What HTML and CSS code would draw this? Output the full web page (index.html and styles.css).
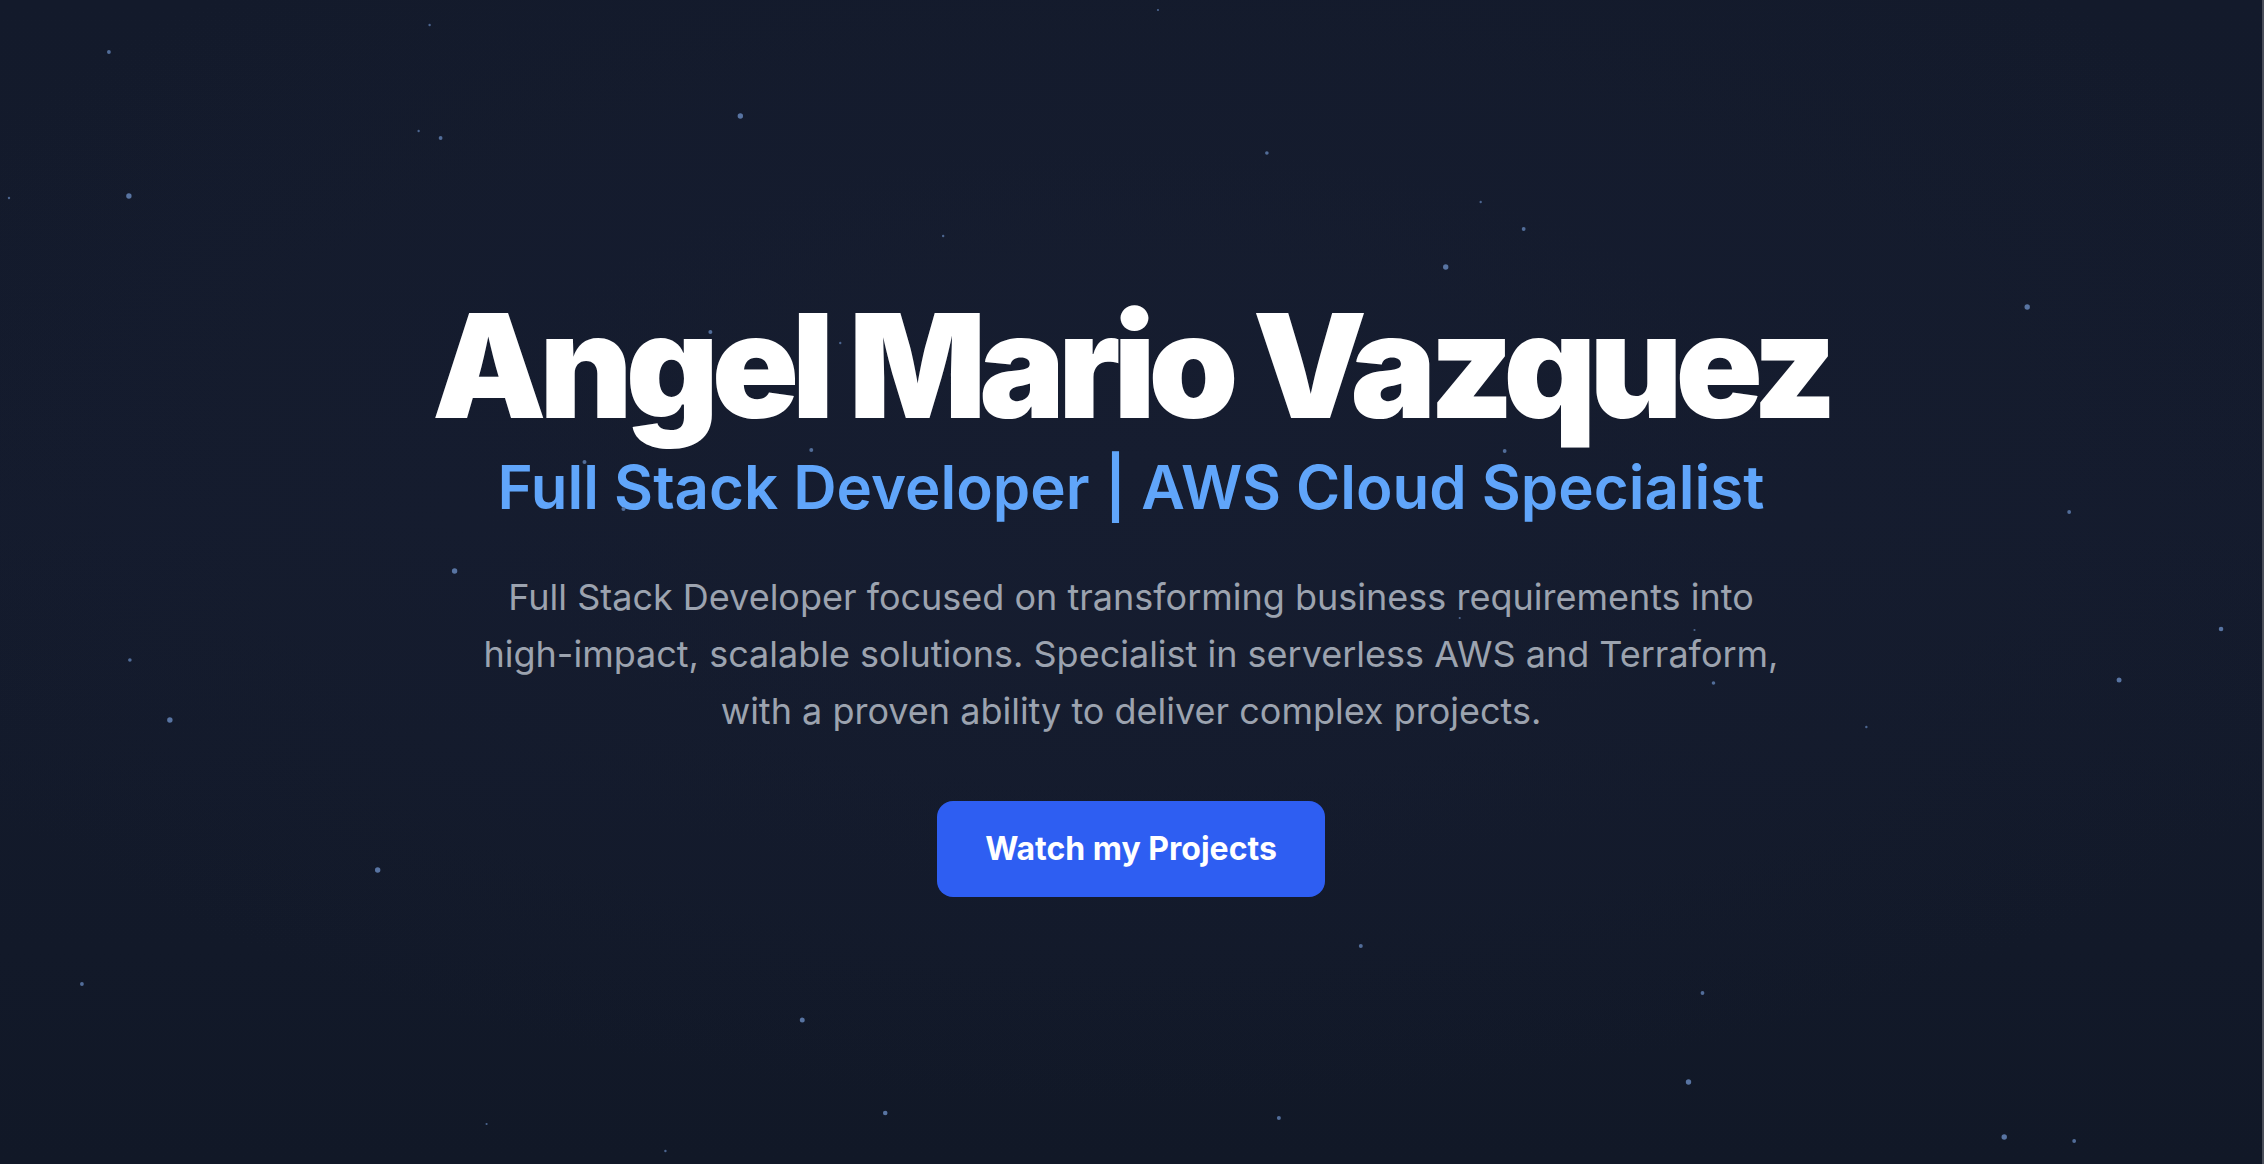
FILE: index.html
```html
<!DOCTYPE html>
<html lang="en">
<head>
<meta charset="utf-8">
<title>Angel Mario Vazquez</title>
<link rel="stylesheet" href="styles.css">
</head>
<body>
<main class="hero">
  <svg class="stars" viewBox="0 0 2264 1164" preserveAspectRatio="none" aria-hidden="true">
    <g class="star-md">
      <circle cx="741" cy="116" r="2.7"/>
      <circle cx="129" cy="196" r="2.7"/>
      <circle cx="455" cy="571" r="2.7"/>
      <circle cx="1447" cy="267" r="2.7"/>
      <circle cx="2029" cy="307" r="2.7"/>
      <circle cx="170" cy="720" r="2.7"/>
      <circle cx="378" cy="870" r="2.7"/>
      <circle cx="803" cy="1020" r="2.5"/>
      <circle cx="2121" cy="680" r="2.5"/>
      <circle cx="1690" cy="1082" r="2.7"/>
      <circle cx="2006" cy="1137" r="2.7"/>
      <circle cx="2223" cy="629" r="2.3"/>
      <circle cx="886" cy="1113" r="2.3"/>
    </g>
    <g class="star-sm">
      <circle cx="109" cy="52" r="1.9"/>
      <circle cx="441" cy="138" r="1.9"/>
      <circle cx="711" cy="332" r="2"/>
      <circle cx="812" cy="450" r="2"/>
      <circle cx="585" cy="462" r="2"/>
      <circle cx="624" cy="509" r="2"/>
      <circle cx="1268" cy="153" r="1.8"/>
      <circle cx="1525" cy="229" r="1.9"/>
      <circle cx="1506" cy="451" r="1.9"/>
      <circle cx="2071" cy="512" r="1.9"/>
      <circle cx="130" cy="660" r="1.8"/>
      <circle cx="82" cy="984" r="1.9"/>
      <circle cx="1715" cy="683" r="1.8"/>
      <circle cx="1362" cy="946" r="2"/>
      <circle cx="1704" cy="993" r="1.9"/>
      <circle cx="1280" cy="1118" r="2"/>
      <circle cx="2076" cy="1141" r="1.9"/>
    </g>
    <g class="star-xs">
      <circle cx="430" cy="25" r="1.2"/>
      <circle cx="419" cy="131" r="1.2"/>
      <circle cx="9" cy="198" r="1.2"/>
      <circle cx="944" cy="236" r="1.2"/>
      <circle cx="841" cy="343" r="1.2"/>
      <circle cx="1159" cy="10" r="1.1"/>
      <circle cx="1482" cy="202" r="1.2"/>
      <circle cx="487" cy="1124" r="1.1"/>
      <circle cx="666" cy="1151" r="1.2"/>
      <circle cx="1461" cy="618" r="1.1"/>
      <circle cx="1696" cy="630" r="1.1"/>
      <circle cx="1868" cy="727" r="1.2"/>
    </g>
  </svg>

  <section class="intro">
    <h1 class="name">Angel Mario Vazquez</h1>
    <h2 class="role">Full Stack Developer | AWS Cloud Specialist</h2>
    <p class="summary">Full Stack Developer focused on transforming business requirements into <span class="nowrap">high-impact,</span> scalable solutions. Specialist in serverless AWS and Terraform, with a proven ability to deliver complex projects.</p>
    <a class="cta" href="#projects">Watch my Projects</a>
  </section>
</main>
</body>
</html>
```

FILE: styles.css
```css
* {
  box-sizing: border-box;
}

html, body {
  margin: 0;
  padding: 0;
}

body {
  font-family: "Inter", "Noto Sans", "Liberation Sans", sans-serif;
  background: #131a2b;
  color: #ffffff;
  overflow: hidden;
}

.hero {
  position: relative;
  min-height: 1164px;
  display: flex;
  flex-direction: column;
  align-items: center;
  justify-content: center;
  background:
    radial-gradient(ellipse 60% 55% at 50% 40%, #161d30 0%, rgba(22, 29, 48, 0) 100%),
    linear-gradient(180deg, #131a2b 0%, #141b2d 45%, #111827 100%);
  border-right: 2px solid #4a4e59;
}

.stars {
  position: absolute;
  inset: 0;
  width: 100%;
  height: 100%;
  z-index: 2;
  pointer-events: none;
}

.star-md {
  fill: #5874a2;
}

.star-sm {
  fill: #526d99;
}

.star-xs {
  fill: #4c658f;
}

.intro {
  position: relative;
  z-index: 1;
  display: flex;
  flex-direction: column;
  align-items: center;
  text-align: center;
  padding-top: 26px;
}

.name {
  margin: 0;
  font-size: 144px;
  line-height: 1;
  font-weight: 900;
  letter-spacing: -0.05em;
  color: #ffffff;
}

.role {
  margin: 12px 0 0;
  font-size: 60px;
  line-height: 1.25;
  font-weight: 600;
  color: #60a5fa;
}

.summary {
  margin: 44px 0 0;
  max-width: 1330px;
  font-size: 36px;
  line-height: 57px;
  font-weight: 400;
  color: #9ca3af;
}

.nowrap {
  white-space: nowrap;
}

.cta {
  margin-top: 61px;
  display: inline-block;
  padding: 22px 48px;
  font-size: 32px;
  line-height: 52px;
  font-weight: 700;
  color: #ffffff;
  text-decoration: none;
  background: #2e5ef2;
  border-radius: 16px;
}
```
